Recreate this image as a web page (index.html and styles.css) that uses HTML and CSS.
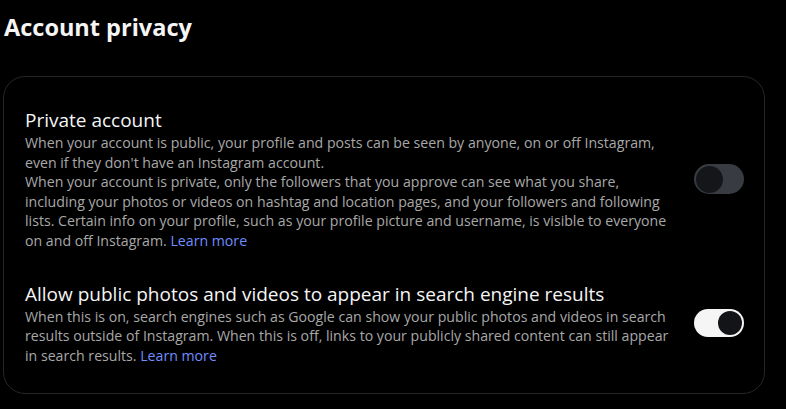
FILE: index.html
```html
<!DOCTYPE html>
<html lang="en">
<head>
<meta charset="utf-8">
<link rel="stylesheet" href="styles.css">
</head>
<body>
<main class="page">
  <h1 class="title">Account privacy</h1>
  <section class="card">
    <div class="row row-first">
      <div class="text">
        <h2 class="heading">Private account</h2>
        <p class="desc">When your account is public, your profile and posts can be seen by anyone, on or off Instagram, even if they don't have an Instagram account.</p>
        <p class="desc">When your account is private, only the followers that you approve can see what you share, including your photos or videos on hashtag and location pages, and your followers and following lists. Certain info on your profile, such as your profile picture and username, is visible to everyone on and off Instagram. <a class="link" href="#">Learn more</a></p>
      </div>
      <div class="toggle toggle-off"><span class="knob"></span></div>
    </div>
    <div class="row row-second">
      <div class="text">
        <h2 class="heading">Allow public photos and videos to appear in search engine results</h2>
        <p class="desc">When this is on, search engines such as Google can show your public photos and videos in search results outside of Instagram. When this is off, links to your publicly shared content can still appear in search results. <a class="link" href="#">Learn more</a></p>
      </div>
      <div class="toggle toggle-on"><span class="knob"></span></div>
    </div>
  </section>
</main>
</body>
</html>
```

FILE: styles.css
```css
html, body {
  margin: 0;
  padding: 0;
  background: #000;
}
body {
  font-family: "Open Sans", "Noto Sans", sans-serif;
  color: #f5f5f5;
}
.page {
  padding: 0 21px 0 3px;
}
.title {
  margin: 0;
  padding: 11px 0 0 1px;
  font-size: 23.5px;
  line-height: 32px;
  font-weight: 700;
  color: #f5f5f5;
}
.card {
  margin-top: 33px;
  border: 1px solid #262626;
  border-radius: 22px;
  padding: 31px 20px 28px 21px;
  display: flex;
  flex-direction: column;
  gap: 31px;
}
.row {
  display: flex;
  align-items: center;
  gap: 20px;
}
.text {
  flex: 1;
  min-width: 0;
}
.heading {
  margin: 0;
  font-size: 19px;
  line-height: 25px;
  font-weight: 400;
  color: #f5f5f5;
}
.desc {
  margin: 0;
  font-size: 14.15px;
  line-height: 19.6px;
  color: #a8a8a8;
}
.link {
  color: #708dff;
  text-decoration: none;
}
.toggle {
  flex: none;
  width: 50px;
  box-sizing: border-box;
  display: flex;
  align-items: center;
}
.knob {
  border-radius: 50%;
  background: #121418;
}
.toggle-off {
  height: 30px;
  border-radius: 15px;
  padding: 1.5px;
  background: #383b41;
  justify-content: flex-start;
}
.toggle-off .knob {
  width: 27px;
  height: 27px;
  background: #14161a;
}
.toggle-on {
  height: 28px;
  border-radius: 14px;
  padding: 2px;
  background: #f5f5f5;
  justify-content: flex-end;
}
.toggle-on .knob {
  width: 24px;
  height: 24px;
}
```
